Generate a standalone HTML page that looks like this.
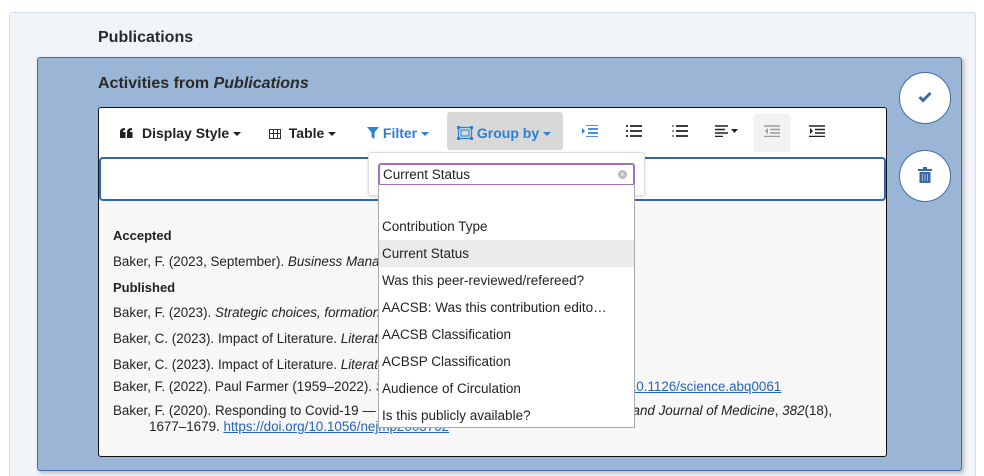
<!DOCTYPE html>
<html><head><meta charset="utf-8"><style>
*{box-sizing:border-box;margin:0;padding:0}
html,body{width:984px;height:476px;overflow:hidden}
body{background:#fff;font-family:"Liberation Sans",Arial,sans-serif;color:#222;position:relative}
.abs{position:absolute}
.outer{left:9px;top:12px;width:967px;height:470px;background:#f1f4f8;border:1px solid #cfdcec;border-radius:3px}
.blue{left:37px;top:57px;width:925px;height:414px;background:#9bb5d6;border:1px solid #3f70a8;border-radius:3px;box-shadow:2px 2px 4px rgba(0,0,0,.25)}
.inner{left:98px;top:107px;width:789px;height:350px;background:#f7f7f7;border:1px solid #111;border-radius:3px;overflow:hidden}
.tb{left:0;top:0;width:787px;height:50px;background:#fff}
.tbi{position:absolute;top:0;height:44px;line-height:44px;font-size:14px;font-weight:bold;color:#222;white-space:nowrap}
.caret{display:inline-block;width:0;height:0;border-left:4px solid transparent;border-right:4px solid transparent;border-top:4px solid currentColor;vertical-align:middle;margin-left:4px}
.inp{left:0;top:49px;width:787px;height:44px;background:#fff;border:2px solid #2f68ad;border-radius:4px}
.t{position:absolute;left:14px;font-size:13.4px;white-space:nowrap}
.circ{width:52px;height:52px;border-radius:50%;background:#fff;border:1px solid #3f70a8}
.dd{left:368px;top:152px;width:277px;height:44px;background:#fff;border:1px solid #ddd;border-radius:3px;box-shadow:0 1px 3px rgba(0,0,0,.15)}
.sel{left:378px;top:163px;width:257px;height:23px;border:2px solid #a870b4;border-radius:3px;background:#fff;font-size:13.5px;line-height:19px;padding-left:3px}
.list{left:378px;top:185px;width:257px;height:243px;background:#fff;border:1px solid #aaa;border-top:none}
.li{position:absolute;left:0;width:255px;height:27px;line-height:27px;padding-left:3px;font-size:13.5px;white-space:nowrap}
a{color:#2563b8}
</style></head><body>
<div class="abs outer"></div>
<div class="abs" style="left:98px;top:29px;font-size:16px;font-weight:bold;color:#2a2a2a">Publications</div>
<div class="abs blue"></div>
<div class="abs" style="left:98px;top:75px;font-size:16px;font-weight:bold;color:#2a2a2a">Activities from <i>Publications</i></div>
<div class="abs inner">
 <div class="abs tb"></div>
 <svg class="abs" style="left:21px;top:20px" width="13" height="10" viewBox="0 0 13 10"><path d="M0 4Q0 0 5 0V2Q3 2 3 4H5.5V10H0ZM7 4Q7 0 12 0V2Q10 2 10 4H12.5V10H7Z" fill="#222"/></svg>
 <div class="tbi" style="left:43px;top:3px">Display Style<span class="caret"></span></div>
 <div class="tbi" style="left:170px;top:3px"><span style="display:inline-block;width:12px;height:10px;border:1.5px solid #333;background:linear-gradient(#333,#333) 3px 0/1px 100% no-repeat,linear-gradient(#333,#333) 7px 0/1px 100% no-repeat,linear-gradient(#333,#333) 0 3px/100% 1px no-repeat;vertical-align:-1px"></span>&nbsp; Table<span class="caret"></span></div>
 <div class="tbi" style="left:268px;top:3px;color:#2b80d8"><svg width="12" height="12" viewBox="0 0 12 12" style="vertical-align:-1px"><path d="M0 0H12L7.5 5.5V12L4.5 10V5.5Z" fill="#2b80d8"/></svg> Filter<span class="caret"></span></div>
 <div class="abs" style="left:348px;top:4px;width:116px;height:38px;background:#d8d8d8;border-radius:3px"></div>
 <div class="tbi" style="left:358px;top:3px;color:#2b80d8"><svg width="16" height="14" viewBox="0 0 16 14" style="vertical-align:-2px"><rect x="1.5" y="1.5" width="13" height="11" fill="none" stroke="#2b80d8" stroke-width="1.2"/><rect x="4" y="4" width="8" height="6" fill="none" stroke="#2b80d8"/><rect x="0" y="0" width="3" height="3" fill="#2b80d8"/><rect x="13" y="0" width="3" height="3" fill="#2b80d8"/><rect x="0" y="11" width="3" height="3" fill="#2b80d8"/><rect x="13" y="11" width="3" height="3" fill="#2b80d8"/></svg> Group by<span class="caret"></span></div>
 <svg class="abs" style="left:483px;top:17px" width="16" height="12"><path d="M4 0H16M6 4H16M6 8H16M4 12H16" stroke="#2b80d8" stroke-width="1.8"/><path d="M0 3L3 6L0 9Z" fill="#2b80d8"/></svg>
 <svg class="abs" style="left:527px;top:17px" width="16" height="12"><path d="M4 1H16M4 6H16M4 11H16M0 1H2M0 6H2M0 11H2" stroke="#222" stroke-width="1.8"/></svg>
 <svg class="abs" style="left:573px;top:17px" width="16" height="13"><path d="M4 1H16M4 6H16M4 11H16" stroke="#222" stroke-width="1.8"/><path d="M0 1H2M0 6H2M0 11H2" stroke="#222" stroke-width="1"/></svg>
 <svg class="abs" style="left:616px;top:17px" width="24" height="12"><path d="M0 1H13M0 4.5H10M0 8H13M0 11.5H8" stroke="#222" stroke-width="1.6"/><path d="M16 4H23L19.5 8Z" fill="#222"/></svg>
 <div class="abs" style="left:654px;top:6px;width:38px;height:38px;background:#f2f2f2;border-radius:4px"></div>
 <svg class="abs" style="left:665px;top:17px" width="16" height="12"><path d="M0 1H16M6 4.5H16M6 8H16M0 11.5H16" stroke="#999" stroke-width="1.6"/><path d="M4 3L1 6L4 9Z" fill="#999"/></svg>
 <svg class="abs" style="left:710px;top:17px" width="16" height="12"><path d="M0 1H16M6 4.5H16M6 8H16M0 11.5H16" stroke="#222" stroke-width="1.6"/><path d="M1 3L4 6L1 9Z" fill="#222"/></svg>
 <div class="abs inp"></div>
 <div class="t" style="top:120px;font-weight:bold;font-size:13px">Accepted</div>
 <div class="t" style="top:146px">Baker, F. (2023, September). <i>Business Management</i></div>
 <div class="t" style="top:172px;font-weight:bold;font-size:13px">Published</div>
 <div class="t" style="top:197px">Baker, F. (2023). <i>Strategic choices, formation and growth</i> (J. Smith &amp; C. Baker, Eds.).</div>
 <div class="t" style="top:223px">Baker, C. (2023). Impact of Literature. <i>Literature</i></div>
 <div class="t" style="top:249px">Baker, C. (2023). Impact of Literature. <i>Literature</i></div>
 <div class="t" style="top:271px">Baker, F. (2022). Paul Farmer (1959–2022). <i>Science</i>, 376(6590), p. 246. <a href="#">https://doi.org/10.1126/science.abq0061</a></div>
 <div class="t" style="top:295px">Baker, F. (2020). Responding to Covid-19 — A Once-in-a-Century Pandemic? <i>New England Journal of Medicine</i>, <i>382</i>(18),</div>
 <div class="t" style="top:311px;left:50px">1677–1679. <a href="#">https://doi.org/10.1056/nejmp2003762</a></div>
</div>
<div class="abs dd"></div>
<div class="abs sel">Current Status<span style="position:absolute;right:6px;top:5px;width:9px;height:9px;border-radius:50%;background:#bbb;color:#fff;font-size:8px;line-height:9px;text-align:center">×</span></div>
<div class="abs list">
 <div class="li" style="top:28px">Contribution Type</div>
 <div class="li" style="top:55px;background:#ebebeb">Current Status</div>
 <div class="li" style="top:82px">Was this peer-reviewed/refereed?</div>
 <div class="li" style="top:109px">AACSB: Was this contribution edito…</div>
 <div class="li" style="top:136px">AACSB Classification</div>
 <div class="li" style="top:163px">ACBSP Classification</div>
 <div class="li" style="top:190px">Audience of Circulation</div>
 <div class="li" style="top:217px">Is this publicly available?</div>
</div>
<div class="abs circ" style="left:899px;top:72px"></div>
<svg class="abs" style="left:918px;top:91px" width="14" height="12"><path d="M1.5 6L5 9.5L12.5 2" fill="none" stroke="#3a6aa6" stroke-width="3"/></svg>
<div class="abs circ" style="left:899px;top:150px"></div>
<svg class="abs" style="left:918px;top:167px" width="14" height="17"><rect x="0" y="2" width="14" height="2" fill="#3a6aa6"/><rect x="5" y="0" width="4" height="2" fill="#3a6aa6"/><path d="M1.5 5H12.5V16H1.5Z" fill="#3a6aa6"/><path d="M4.5 7V14M7 7V14M9.5 7V14" stroke="#9bb5d6" stroke-width="1"/></svg>
</body></html>
